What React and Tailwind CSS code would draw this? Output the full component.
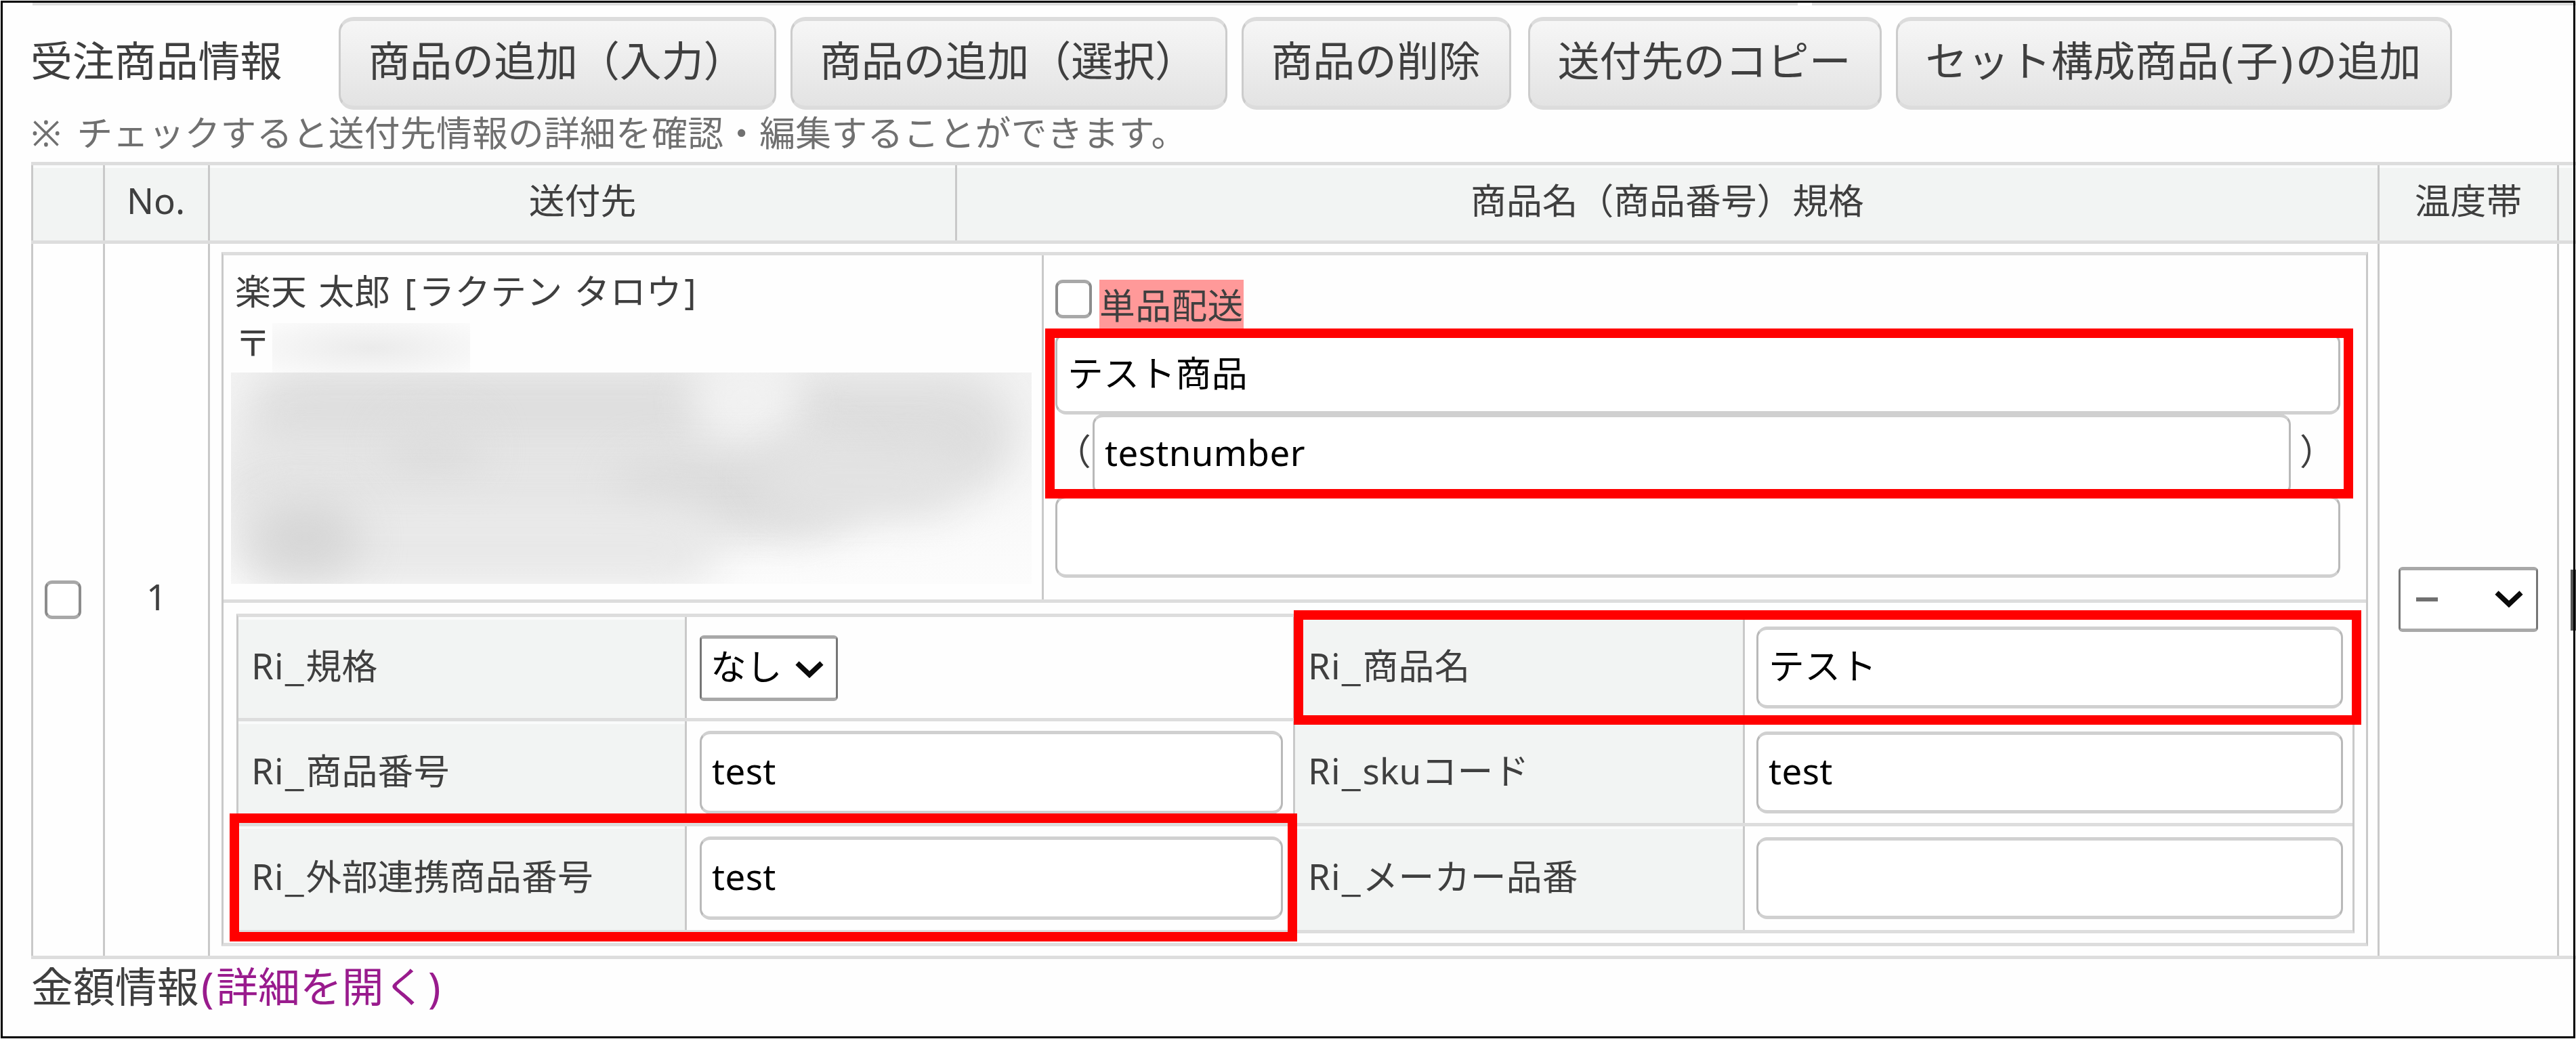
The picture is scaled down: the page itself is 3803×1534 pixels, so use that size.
import React from "react";

const buttons = [
  { label: "商品の追加（入力）", className: "w-[646px]" },
  { label: "商品の追加（選択）", className: "w-[645px] ml-[21px]" },
  { label: "商品の削除", className: "w-[398px] ml-[21px]" },
  { label: "送付先のコピー", className: "w-[522px] ml-[25px]" },
  { label: "セット構成商品(子)の追加", className: "w-[821px] ml-[21px]" },
];

const specRows = [
  {
    height: "h-[149px]",
    left: { label: "規格", select: "なし" },
    right: { label: "商品名", value: "テスト" },
  },
  {
    height: "h-[155px] border-t-[5px]",
    left: { label: "商品番号", value: "test" },
    right: { label: "skuコード", value: "test" },
  },
  {
    height: "h-[158px] border-t-[5px]",
    left: { label: "外部連携商品番号", value: "test" },
    right: { label: "メーカー品番", value: "" },
  },
];

// masked address, positions are relative to the mask
const smudges = [
  "left-[20px] top-[-10px] w-[720px] h-[170px] bg-[#dedede]",
  "left-[780px] top-[0px] w-[380px] h-[180px] bg-[#dedede]",
  "left-[-20px] top-[90px] w-[960px] h-[150px] bg-[#e5e5e5]",
  "left-[680px] top-[-20px] w-[160px] h-[130px] bg-[#f1f1f1]",
  "left-[230px] top-[70px] w-[140px] h-[90px] bg-[#dddddd]",
  "left-[570px] top-[130px] w-[310px] h-[90px] bg-[#dbdbdb]",
  "left-[780px] top-[110px] w-[290px] h-[100px] bg-[#e2e2e2]",
  "left-[0px] top-[190px] w-[720px] h-[130px] bg-[#e8e8e8]",
  "left-[30px] top-[190px] w-[160px] h-[110px] bg-[#d6d6d6]",
];

const TextBox = ({ value, className }) => (
  <div
    className={`flex items-center shrink-0 rounded-[16px] border-x-[3px] border-y-[5px] border-x-[#b9b9b9] border-y-[#d0d0d0] bg-white text-black pl-[15px] tracking-[0.4px] ${className}`}
  >
    {value}
  </div>
);

const Chevron = ({ className }) => (
  <svg viewBox="0 0 42 28" className={className} fill="none">
    <path d="M3 4 L21 21 L39 4" stroke="#0a0a0a" strokeWidth="7.5" />
  </svg>
);

const CheckBox = ({ className }) => (
  <div
    className={`w-[54px] h-[57px] shrink-0 rounded-[11px] border-x-[4px] border-y-[5px] border-x-[#8c8c8c] border-y-[#a8a8a8] bg-white ${className}`}
  ></div>
);

// half-width brackets get a little air on both sides
const Spaced = ({ text }) =>
  text.split(/([()[\]])/).map((part, i) =>
    /^[()[\]]$/.test(part) ? (
      <span key={i} className="px-[3.5px]">
        {part}
      </span>
    ) : (
      part
    )
  );

const SpecLabel = ({ text, className }) => (
  <div
    className={`flex items-center bg-[#f2f4f3] shadow-[inset_0_4px_0_#fafbfb] pl-[19px] pb-[4px] tracking-[0.3px] ${className}`}
  >
    <span className="tracking-[1.2px]">Ri</span>
    <span className="font-['Noto_Sans_CJK_JP'] tracking-[2px]">_</span>
    {text}
  </div>
);

const App = () => {
  return (
    <div className="relative w-[3803px] h-[1534px] overflow-hidden bg-[#fefefe] text-[#3f3f3f] text-[52.8px] leading-none whitespace-nowrap font-['Noto_Sans','Noto_Sans_CJK_JP',sans-serif]">
      <div className="flex h-[25px] pt-[3px] pl-[48px]">
        <div className="w-[2606px] h-[5px] bg-[#dddddd]"></div>
        <div className="grow ml-[21px] h-[5px] bg-[#dddddd]"></div>
      </div>

      <div className="flex items-center h-[137px] pl-[45px] text-[61.9px]">
        <h2 className="w-[455px] pb-[8px]">受注商品情報</h2>
        {buttons.map((button) => (
          <div
            key={button.label}
            className={`flex items-center justify-center shrink-0 h-[137px] pb-[8px] rounded-[22px] border-x-[3px] border-y-[6px] border-x-[#cccccc] border-y-[#dcdcdc] bg-linear-to-b from-[#f6f6f6] to-[#e3e3e3] ${button.className}`}
          >
            <span className="mr-[2px]">
              <Spaced text={button.label} />
            </span>
          </div>
        ))}
      </div>

      <p className="flex items-center h-[77px] pl-[46px] pb-[8px] text-[#707070] tracking-[0.25px] [word-spacing:9px]">
        ※ チェックすると送付先情報の詳細を確認・編集することができます。
      </p>

      <div className="ml-[46px] border-y-[5px] border-[#dddddd]">
        <div className="flex h-[116px] border-b-[5px] border-[#dddddd] bg-[#f2f4f3] shadow-[inset_0_4px_0_#fafbfb] *:flex *:items-center *:justify-center *:border-l-[3px] *:border-[#c9c9c9] *:pb-[7px] *:shrink-0">
          <div className="w-[106px]"></div>
          <div className="w-[155px] pr-[2px]">No.</div>
          <div className="w-[1103px]">送付先</div>
          <div className="w-[2100px]">商品名（商品番号）規格</div>
          <div className="w-[265px]">温度帯</div>
          <div className="w-[28px]"></div>
        </div>

        <div className="flex h-[1051px] *:border-l-[3px] *:border-[#c9c9c9] *:shrink-0">
          <div className="flex items-center w-[106px] pl-[17px]">
            <CheckBox />
          </div>
          <div className="flex items-center justify-center w-[155px] pb-[9px]">
            1
          </div>

          <div className="w-[3203px] pl-[17px] pt-[12px]">
            <div className="w-[3169px] h-[1025px] border-x-[3px] border-y-[5px] border-x-[#c9c9c9] border-y-[#dddddd]">
              <div className="flex h-[513px] border-b-[5px] border-[#dddddd]">
                <div className="w-[1208px] pl-[11px] pt-[27px]">
                  <p className="pl-[6px] tracking-[0.3px] [word-spacing:3px]">
                    <Spaced text="楽天 太郎 [ラクテン タロウ]" />
                  </p>
                  <div className="flex h-[73px] mt-[20px] pl-[6px]">
                    <span className="w-[55px] pt-[3px]">〒</span>
                    <div className="w-[292px] h-[73px] bg-radial from-[#ebebeb] to-[#fbfbfb]"></div>
                  </div>
                  <div className="relative w-[1182px] h-[312px] overflow-hidden bg-linear-to-b from-[#f3f3f3] to-[#fcfcfc]">
                    {smudges.map((smudge) => (
                      <div
                        key={smudge}
                        className={`absolute rounded-full blur-[32px] ${smudge}`}
                      ></div>
                    ))}
                  </div>
                </div>

                <div className="w-[1955px] border-l-[3px] border-[#c9c9c9] pl-[17px] pt-[36px]">
                  <div className="flex h-[77px]">
                    <CheckBox />
                    <span className="h-[77px] ml-[11px] pt-[12px] bg-[#ff9999] tracking-[0.4px]">
                      単品配送
                    </span>
                  </div>
                  <TextBox value="テスト商品" className="w-[1897px] h-[122px]" />
                  <div className="flex items-center h-[119px]">
                    <span className="w-[55px] pb-[10px]">（</span>
                    <TextBox
                      value="testnumber"
                      className="w-[1769px] h-[122px] pb-[7px]"
                    />
                    <span className="ml-[13px] pb-[10px]">）</span>
                  </div>
                  <TextBox value="" className="w-[1897px] h-[122px]" />
                </div>
              </div>

              <div className="pl-[19px] pt-[16px]">
                <div className="w-[3127px] border-x-[3px] border-y-[5px] border-x-[#c9c9c9] border-y-[#dddddd]">
                  {specRows.map((row) => (
                    <div
                      key={row.left.label}
                      className={`flex border-[#dddddd] ${row.height}`}
                    >
                      <SpecLabel text={row.left.label} className="w-[659px]" />
                      <div className="flex items-center w-[898px] border-l-[3px] border-[#c9c9c9] pl-[19px]">
                        {row.left.select ? (
                          <div className="flex items-center w-[204px] h-[97px] rounded-[6px] border-x-[3px] border-y-[5px] border-x-[#767676] border-y-[#a8a8a8] bg-white pl-[13px] pb-[4px] mt-[2px] text-black">
                            {row.left.select}
                            <Chevron className="w-[42px] h-[28px] ml-[19px] mt-[8px]" />
                          </div>
                        ) : (
                          <TextBox
                            value={row.left.value}
                            className="w-[861px] h-[123px] pb-[4px]"
                          />
                        )}
                      </div>
                      <SpecLabel
                        text={row.right.label}
                        className="w-[664px] border-l-[3px] border-[#c9c9c9]"
                      />
                      <div className="flex items-center w-[900px] border-l-[3px] border-[#c9c9c9] pl-[17px]">
                        <TextBox
                          value={row.right.value}
                          className="w-[866px] h-[121px] pb-[4px]"
                        />
                      </div>
                    </div>
                  ))}
                </div>
              </div>
            </div>
          </div>

          <div className="flex items-center w-[265px] pl-[28px]">
            <div className="flex items-center justify-between w-[206px] h-[96px] mb-[2px] rounded-[6px] border-x-[3px] border-y-[5px] border-x-[#767676] border-y-[#a8a8a8] bg-white pl-[23px] pr-[19px]">
              <span className="w-[32px] h-[6px] bg-[#707070]"></span>
              <Chevron className="w-[42px] h-[28px]" />
            </div>
          </div>
          <div className="flex items-center w-[28px] pl-[17px]">
            <div className="w-[8px] h-[90px] bg-[#555555]"></div>
          </div>
        </div>
      </div>

      <div className="pl-[46px] pt-[10px] text-[61.9px]">
        金額情報
        <span className="text-[#991b8d]">
          <Spaced text="(詳細を開く)" />
        </span>
      </div>

      <div className="absolute left-[1543px] top-[485px] w-[1931px] h-[251px] border-[14px] border-[#ff0000]"></div>
      <div className="absolute left-[1910px] top-[901px] w-[1576px] h-[169px] border-[14px] border-[#ff0000]"></div>
      <div className="absolute left-[339px] top-[1201px] w-[1576px] h-[189px] border-[14px] border-[#ff0000]"></div>
      <div className="absolute inset-px border-[3px] border-black"></div>
    </div>
  );
};

export default App;
